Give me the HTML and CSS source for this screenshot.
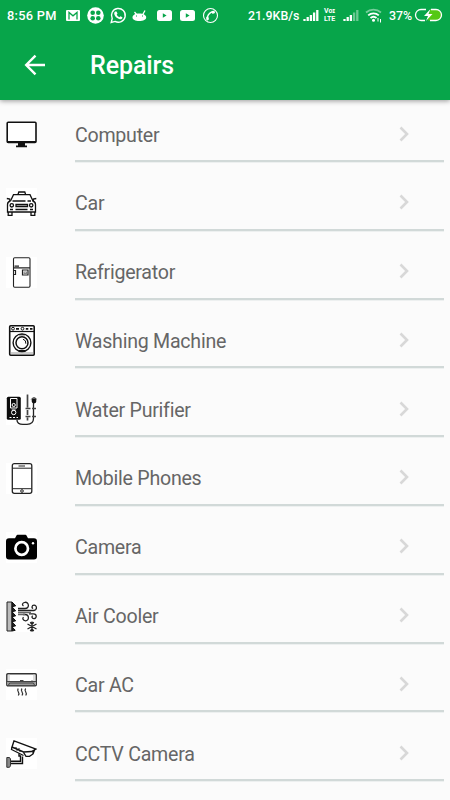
FILE: index.html
```html
<!DOCTYPE html>
<html lang="en">
<head>
    <meta charset="utf-8">
    <title>Repairs</title>
    <link rel="stylesheet" href="styles.css">
</head>
<body>

    <header class="header">
        <div class="status">
            <span class="time">8:56 PM</span>
            <svg class="notes" width="154" height="18" viewBox="0 0 154 18">
                <!-- mail -->
                <rect x="1" y="4" width="14" height="11" rx="1" fill="#fff"/>
                <path d="M4 13.500V6.500l4 3.300 4-3.300v7" fill="none" stroke="#07a54a" stroke-width="1.300"/>
                <!-- clover -->
                <circle cx="30.500" cy="9.500" r="8.300" fill="#fff"/>
                <g fill="#07a54a"><circle cx="27.700" cy="6.700" r="2.300"/><circle cx="33.300" cy="6.700" r="2.300"/><circle cx="27.700" cy="12.300" r="2.300"/><circle cx="33.300" cy="12.300" r="2.300"/></g>
                <!-- whatsapp -->
                <path d="M46.200 16.500l1-4a6.900 6.900 0 1 1 2.800 2.900z" fill="none" stroke="#fff" stroke-width="1.400"/>
                <path d="M50.300 5.600l1.200-.2 1 2.200-.8 1.200c.6 1.200 1.500 2 2.700 2.500l1-1.100 2 1c.1 1.600-1.400 2.300-2.600 2-3-.7-5.400-3.300-5.600-5.700 0-.8.500-1.600 1.100-1.900z" fill="#fff"/>
                <!-- android -->
                <path d="M67.500 11.500c0-2.500 2.800-4 6.700-4s7 1.500 7 4c0 2.300-3 3.500-7 3.500s-6.700-1.200-6.700-3.500z" fill="#fff"/>
                <path d="M69.500 6l2.500 3M80 4.500L77.500 9" stroke="#fff" stroke-width="1.300"/>
                <path d="M71 10h1M77 10h1" stroke="#07a54a"/>
                <!-- youtube -->
                <rect x="92" y="4" width="15" height="11" rx="2.500" fill="#fff"/>
                <path d="M97.800 7.300v4.400l3.800-2.200z" fill="#07a54a"/>
                <rect x="115" y="4" width="15" height="11" rx="2.500" fill="#fff"/>
                <path d="M120.800 7.300v4.400l3.800-2.200z" fill="#07a54a"/>
                <!-- call -->
                <circle cx="145.500" cy="9.500" r="7" fill="none" stroke="#fff" stroke-width="1.100"/>
                <path d="M142.200 14c-.6-4 2-7.500 6-8.500" fill="none" stroke="#fff" stroke-width="1.500"/>
                <path d="M146.500 5.200l3-.8.5 2.600-2.500 1zM141 11.500l2.300-.8.700 2.500-1.800 1.500z" fill="#fff"/>
            </svg>
            <span class="speed">21.9KB/s</span>
            <svg class="signal" width="17" height="14" viewBox="0 0 17 14">
                <path d="M1.500 13v-2M4.700 13v-4M7.900 13V7M11.100 13V4.500M14.300 13V2" stroke="#fff" stroke-width="2.300"/>
            </svg>
            <span class="volte"><b>Vo&#618;</b><b>LTE</b></span>
            <svg class="signal2" width="17" height="14" viewBox="0 0 17 14">
                <path d="M1.500 13v-2M4.700 13v-4M7.900 13V7" stroke="#fff" stroke-width="2.300"/>
                <path d="M11.100 13V4.500M14.300 13V2" stroke="#fff" stroke-width="2.300" opacity=".4"/>
            </svg>
            <svg class="wifi" width="18" height="16" viewBox="0 0 18 16">
                <path d="M1 5.500a11.500 11.500 0 0 1 15 0" fill="none" stroke="#fff" stroke-width="1.700" opacity=".45"/>
                <path d="M3.200 8.300a8 8 0 0 1 10.600 0M5.500 11a4.600 4.600 0 0 1 6 0" fill="none" stroke="#fff" stroke-width="1.800"/>
                <circle cx="8.500" cy="13.200" r="1.500" fill="#fff"/>
                <path d="M13 11v3.500M15.500 12v3.500" stroke="#fff"/>
            </svg>
            <span class="percent">37%</span>
            <svg class="battery" width="29" height="14" viewBox="0 0 29 14">
                <path d="M16 1.500h6a5.500 5.500 0 0 1 0 11h-8z" fill="#55c814"/>
                <path d="M12 1.500H7a5.500 5.500 0 0 0 0 11h4M17 1.500h5a5.500 5.500 0 0 1 0 11h-6" fill="none" stroke="#fff" stroke-width="1.300"/>
                <path d="M16.500 1L10 8h4l-2 5 6.500-7h-4z" fill="#fff"/>
            </svg>
        </div>
        <div class="toolbar">
            <svg class="back" width="22" height="22" viewBox="0 0 22 22">
                <path d="M21 11H2.500M11.500 1.700L2.200 11l9.300 9.300" fill="none" stroke="#fff" stroke-width="2.400"/>
            </svg>
            <h1>Repairs</h1>
        </div>
    </header>

    <ul class="list">
        <li class="item">
            <svg class="icon clear" viewBox="0 0 31 31">
                <rect x="1.200" y="3.200" width="28.800" height="20.300" rx="1" fill="#fff" stroke="#111" stroke-width="1.600"/>
                <path d="M1 23h29M10 27.300h11" stroke="#111" stroke-width="1.800"/>
                <path d="M12 23.500h7v3.500h-7z" fill="#111"/>
            </svg>
            <div class="row"><span>Computer</span><svg class="arrow" viewBox="0 0 10 16"><path d="M1.500 1.500L8 8l-6.500 6.500"/></svg></div>
        </li>
        <li class="item">
            <svg class="icon" viewBox="0 0 31 31">
                <g fill="none" stroke="#111" stroke-width="1.300">
                    <path d="M12 6.500l.8-2.500h6l.8 2.500M4.500 13l3-6.300h16.500L27 13M6.500 13h13M21.500 13H25"/>
                    <path d="M4.500 13c-2.500.5-3 2-3 3.500V24h28v-7.500c0-1.500-.5-3-3-3.500M2.200 24v3.300h3.800V24M25 24v3.300h3.800V24M.8 10.500l3 .5v2M30.300 10.500l-3 .5v2"/>
                    <circle cx="5.800" cy="17.300" r="1.700"/><circle cx="25.200" cy="17.300" r="1.700"/>
                    <path d="M10 16.500h11.500v2H10zM9.500 21.500h12M4 21.500h3M24 21.500h3"/>
                </g>
            </svg>
            <div class="row"><span>Car</span><svg class="arrow" viewBox="0 0 10 16"><path d="M1.500 1.500L8 8l-6.500 6.500"/></svg></div>
        </li>
        <li class="item">
            <svg class="icon" viewBox="0 0 31 31">
                <g fill="none" stroke="#222" stroke-width="1.100">
                    <rect x="7.500" y=".8" width="16.500" height="29.500" rx="1.200"/>
                    <path d="M8 10.800h16M8.500 9.200h4.500M7.500 13.500h2v4h-2M16.500 13h5.500v5h-5.500z" stroke-width="1.200"/>
                    <path d="M18 15h2.500v1.500H18z" stroke="#888"/>
                </g>
            </svg>
            <div class="row"><span>Refrigerator</span><svg class="arrow" viewBox="0 0 10 16"><path d="M1.500 1.500L8 8l-6.500 6.500"/></svg></div>
        </li>
        <li class="item">
            <svg class="icon" viewBox="0 0 31 31">
                <g fill="none" stroke="#111">
                    <rect x="3.700" y=".8" width="24.500" height="29.400" rx="1" stroke-width="1.600"/>
                    <path d="M4 6.500h24" stroke-width="1.200"/>
                    <circle cx="7" cy="3.700" r="1.400"/><circle cx="16.500" cy="3.700" r="1.400"/>
                    <path d="M10 3.800h3M19.800 3.800h2.500M24 3.800h2.500" stroke-width="1.700"/>
                    <circle cx="16" cy="17.800" r="8.900" stroke-width="1.400"/>
                    <circle cx="16" cy="17.800" r="6" stroke-width="1.500"/>
                    <path d="M17 14.200a4 4 0 0 1 2.800 4.500M13 9.800h6M12.500 25.500h7"/>
                    <path d="M4.500 28h23" stroke="#999"/>
                </g>
            </svg>
            <div class="row"><span>Washing Machine</span><svg class="arrow" viewBox="0 0 10 16"><path d="M1.500 1.500L8 8l-6.500 6.500"/></svg></div>
        </li>
        <li class="item">
            <svg class="icon" viewBox="0 0 31 31">
                <rect x=".8" y="2.800" width="14" height="23" rx="1.500" fill="#0c0c0c"/>
                <g fill="none" stroke="#fff">
                    <path d="M4.500 4.500H11v9.500H4.500z"/><circle cx="7.700" cy="11" r="1.600"/>
                    <circle cx="7.700" cy="18.500" r="2.200"/><path d="M5.700 16h4M3.500 23.500h2M7 23.500h2M10.500 23.500h1.500"/>
                </g>
                <path d="M11 26c0 3 2.500 4.300 6 4.300h4c4.500 0 6.500-2.300 6.500-6V9" fill="none" stroke="#222" stroke-width="1.300"/>
                <path d="M21.500.5v13M21.500 16v5M21.500 23.500v3M19.500 14.500h5M26 14.500h4M19.500 22.500h5M26 22.500h4" fill="none" stroke="#444" stroke-width="1.700"/>
                <circle cx="28" cy="7" r="2.400" fill="#111"/>
                <path d="M25.300 5.500a3 3 0 0 1 5.400 0" fill="none" stroke="#111"/>
            </svg>
            <div class="row"><span>Water Purifier</span><svg class="arrow" viewBox="0 0 10 16"><path d="M1.500 1.500L8 8l-6.500 6.500"/></svg></div>
        </li>
        <li class="item">
            <svg class="icon" viewBox="0 0 31 31">
                <g fill="none" stroke="#222">
                    <rect x="6.300" y=".7" width="19.500" height="29.600" rx="2" stroke-width="1.300"/>
                    <path d="M6.500 5.200h19M6.500 25.700h19M12.500 3h6.500"/>
                    <circle cx="16" cy="28" r="1.300"/>
                </g>
            </svg>
            <div class="row"><span>Mobile Phones</span><svg class="arrow" viewBox="0 0 10 16"><path d="M1.500 1.500L8 8l-6.500 6.500"/></svg></div>
        </li>
        <li class="item">
            <svg class="icon" viewBox="0 0 31 31">
                <path d="M3 6.300h6L10.500 3.500q.3-.7 1-.7h8q.7 0 1 .7L22 6.300h6q3 0 3 3v15.200q0 3-3 3H3q-3 0-3-3V9.300q0-3 3-3z" fill="#000"/>
                <circle cx="15.700" cy="16.500" r="6.300" fill="none" stroke="#fff" stroke-width="2.700"/>
                <circle cx="27" cy="11.300" r="1.200" fill="#fff"/>
            </svg>
            <div class="row"><span>Camera</span><svg class="arrow" viewBox="0 0 10 16"><path d="M1.500 1.500L8 8l-6.500 6.500"/></svg></div>
        </li>
        <li class="item">
            <svg class="icon" viewBox="0 0 31 31">
                <path d="M1 1h5v29H1z" fill="#bbb" stroke="#222"/>
                <path d="M6 1l3.700 3.800-3.700 1 3.700 4-3.700 1 3.700 4-3.700 1 3.700 4-3.700 1 3.700 4-3.700 1 3.200 3.500L6 30z" fill="#222" stroke="#111"/>
                <g fill="none" stroke="#222" stroke-width="1.300">
                    <path d="M12 9.500h16c3.500-.5 3-5.500 0-5.300-2.400.2-2.500 2.800-.9 3.300M12 7.500h7c5 0 4-6.700 0-6.200-2.700.3-3.200 2.700-1.500 3.700M17 13.500h2c4.700 0 4.200 6.500.5 6.300-2.700-.2-3.200-2.400-2-3.700M23 12.800h4.500c3.900.2 3.200 5 .3 4.800-2-.2-2.300-2-1-2.800"/>
                    <path d="M12 11.500h13M12 13.500h7" stroke="#666"/>
                    <path d="M26 20.500v10.200M21.500 23l9 5M30.500 23l-9 5M24.200 21.300l1.800 2 1.800-2M24.200 30l1.800-2 1.800 2" stroke-width="1.300"/>
                </g>
            </svg>
            <div class="row"><span>Air Cooler</span><svg class="arrow" viewBox="0 0 10 16"><path d="M1.500 1.500L8 8l-6.500 6.500"/></svg></div>
        </li>
        <li class="item">
            <svg class="icon" viewBox="0 0 31 31">
                <rect x=".8" y="4.700" width="29.500" height="12" rx="1" fill="#fff" stroke="#333" stroke-width="1.400"/>
                <path d="M1.500 12.800h28v3.400h-28z" fill="#999"/>
                <path d="M1 12.500h29M2.500 16l1.200-2h23.600l1.200 2M14 11.500h3.500" fill="none" stroke="#444"/>
                <path d="M3 5v7M28 5v7M25 11.500h2" fill="none" stroke="#bbb"/>
                <path d="M12.300 19.500q-1.300 1.500 0 3.300t0 3.700M16 19.500q-1.300 1.500 0 3.300t0 3.700M19.700 19.500q-1.300 1.500 0 3.300t0 3.700" fill="none" stroke="#333" stroke-width="1.200"/>
            </svg>
            <div class="row"><span>Car AC</span><svg class="arrow" viewBox="0 0 10 16"><path d="M1.500 1.500L8 8l-6.500 6.500"/></svg></div>
        </li>
        <li class="item">
            <svg class="icon" viewBox="0 0 31 31">
                <g fill="none" stroke="#111" stroke-width="1.400">
                    <path d="M8 2.800L30 11l-4.500 2.500-8 .5L6 9z"/>
                    <path d="M6 9l-.5 2.500 12 6M17.500 14.300l2.500 4h3.500l3.500-2.300V13M28.500 12l-1.500 4" stroke-width="1.300"/>
                    <path d="M13 15.500v2.500h1.500v5.200H5M5 25.500h11.500V18.500"/>
                    <path d="M9.500 9.500l1 .3M12.500 10.500l1 .3M10.500 12l1 .3M13.500 13.200l1 .3" stroke-width="1.300"/>
                </g>
                <path d="M.8 19.500h2.700l1 1.500v6.800l-1 1.500H.8z" fill="#888" stroke="#333"/>
            </svg>
            <div class="row"><span>CCTV Camera</span><svg class="arrow" viewBox="0 0 10 16"><path d="M1.500 1.500L8 8l-6.500 6.500"/></svg></div>
        </li>
    </ul>

</body>
</html>
```

FILE: styles.css
```css
body
{
    font-family: Roboto, Arial, sans-serif;
    margin: 0;
    height: 800px;
    overflow: hidden;
    color: #666;
    background-color: #fbfbfb;
}
svg
{
    display: block;
    flex: none;
}
.header
{
    height: 100px;
    color: #fff;
    background-color: #07a54a;
    box-shadow: 0 1px 5px rgba(0,0,0,.4);
}
.status
{
    display: flex;
    align-items: center;
    height: 30px;
    padding: 0 6px 0 7px;
    font-size: 12.8px;
    font-weight: 500;
    white-space: nowrap;
}
.time
{
    width: 58px;
    letter-spacing: .3px;
}
.notes
{
    margin-top: -1px;
}
.speed
{
    width: 55px;
    margin-left: 29px;
    font-size: 12.4px;
}
.volte
{
    display: flex;
    flex-direction: column;
    width: 16px;
    margin-left: 4px;
    font-size: 7px;
    line-height: 8px;
}
.signal2
{
    margin-left: 3px;
}
.wifi
{
    margin-left: 5px;
}
.percent
{
    width: 24px;
    margin-left: 6px;
    font-size: 12.4px;
}
.battery
{
    margin-left: 1px;
}
.toolbar
{
    display: flex;
    align-items: center;
    height: 70px;
    padding-left: 24px;
}
h1
{
    margin: 0 0 0 44px;
    font-size: 25px;
    font-weight: 500;
    letter-spacing: -.1px;
}
.list
{
    display: grid;
    row-gap: 6.8px;
    margin: 0;
    padding: 0;
    list-style: none;
}
.item
{
    display: flex;
    height: 62px;
    padding: 0 6px;
}
.icon
{
    width: 31px;
    height: 31px;
    margin-top: 19px;
    background-color: #fff;
}
.icon.clear
{
    background-color: transparent;
}
.row
{
    display: flex;
    flex: 1;
    align-items: center;
    justify-content: space-between;
    margin-left: 38px;
    padding: 10px 35px 0 0;
    font-size: 19.600px;
    letter-spacing: -.25px;
    border-bottom: 2px solid #d1d9d8;
    box-shadow: 0 1px 0 #edf0f0;
}
.arrow
{
    width: 10px;
    height: 16px;
    margin-top: -3px;
    fill: none;
    stroke: #d8d8d8;
    stroke-width: 2.600;
}
```
